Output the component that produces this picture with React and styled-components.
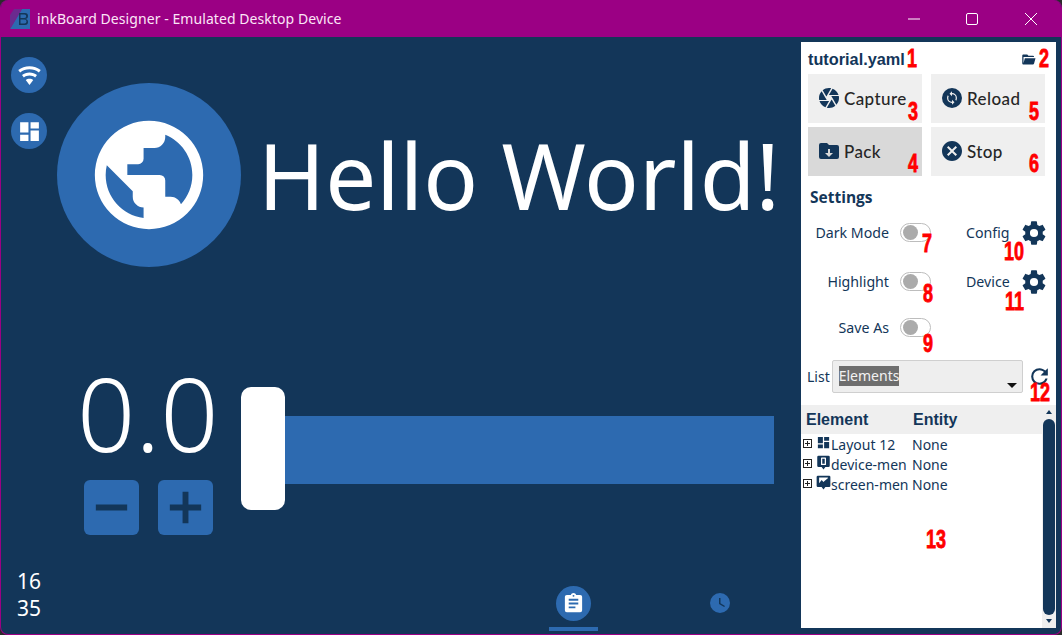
import React from "react";
import styled, { createGlobalStyle } from "styled-components";

const NAVY = "#133659";
const BLUE = "#2d6ab0";

const GlobalStyle = createGlobalStyle`
  html, body {
    margin: 0;
    padding: 0;
    background: #2b2b2b;
    overflow: hidden;
  }
  * { box-sizing: border-box; }
`;

const ICONS = {
  earth: "M17.9,17.39C17.64,16.59 16.89,16 16,16H15V13A1,1 0 0,0 14,12H8V10H10A1,1 0 0,0 11,9V7H13A2,2 0 0,0 15,5V4.59C17.93,5.77 20,8.64 20,12C20,14.08 19.2,15.97 17.9,17.39M11,19.93C7.05,19.44 4,16.08 4,12C4,11.38 4.08,10.78 4.21,10.21L9,15V16A2,2 0 0,0 11,18M12,2A10,10 0 0,0 2,12A10,10 0 0,0 12,22A10,10 0 0,0 22,12A10,10 0 0,0 12,2Z",
  wifi: "M12,21L15.6,16.2C14.6,15.45 13.35,15 12,15C10.65,15 9.4,15.45 8.4,16.2L12,21M12,3C7.95,3 4.21,4.34 1.2,6.6L3,9C5.5,7.12 8.62,6 12,6C15.38,6 18.5,7.12 21,9L22.8,6.6C19.79,4.34 16.05,3 12,3M12,9C9.3,9 6.81,9.89 4.8,11.4L6.6,13.8C8.1,12.67 9.97,12 12,12C14.03,12 15.9,12.67 17.4,13.8L19.2,11.4C17.19,9.89 14.7,9 12,9Z",
  dashboard: "M13,3V9H21V3M13,21H21V11H13M3,21H11V15H3M3,13H11V3H3V13Z",
  iris: "M13.73,15L9.83,21.76C10.53,21.91 11.25,22 12,22C14.4,22 16.6,21.15 18.32,19.75L14.66,13.4M2.46,15C3.38,17.92 5.61,20.26 8.45,21.34L12.12,15M8.54,12L4.64,5.25C3,7 2,9.39 2,12C2,12.68 2.07,13.35 2.2,14H9.69M21.8,10H14.31L14.6,10.5L19.36,18.75C21,16.97 22,14.6 22,12C22,11.31 21.93,10.64 21.8,10M21.54,9C20.62,6.07 18.39,3.74 15.55,2.66L11.88,9M9.4,10.5L14.17,2.24C13.47,2.09 12.75,2 12,2C9.6,2 7.4,2.84 5.68,4.25L9.34,10.6L9.4,10.5Z",
  closeCircle: "M12,2C17.53,2 22,6.47 22,12C22,17.53 17.53,22 12,22C6.47,22 2,17.53 2,12C2,6.47 6.47,2 12,2M15.59,7L12,10.59L8.41,7L7,8.41L10.59,12L7,15.59L8.41,17L12,13.41L15.59,17L17,15.59L13.41,12L17,8.41L15.59,7Z",
  folderDown: "M20,6H12L10,4H4A2,2 0 0,0 2,6V18A2,2 0 0,0 4,20H20A2,2 0 0,0 22,18V8A2,2 0 0,0 20,6M12,18L8,14H11V10H13V14H16L12,18Z",
  folderOpen: "M19,20H4C2.89,20 2,19.1 2,18V6C2,4.89 2.89,4 4,4H10L12,6H19A2,2 0 0,1 21,8H21L4,8V18L6.14,10H23.21L20.93,18.5C20.7,19.37 19.92,20 19,20Z",
  cog: "M12,15.5A3.5,3.5 0 0,1 8.5,12A3.5,3.5 0 0,1 12,8.5A3.5,3.5 0 0,1 15.5,12A3.5,3.5 0 0,1 12,15.5M19.43,12.97C19.47,12.65 19.5,12.33 19.5,12C19.5,11.67 19.47,11.34 19.43,11L21.54,9.37C21.73,9.22 21.78,8.95 21.66,8.73L19.66,5.27C19.54,5.05 19.27,4.96 19.05,5.05L16.56,6.05C16.04,5.66 15.5,5.32 14.87,5.07L14.5,2.42C14.46,2.18 14.25,2 14,2H10C9.75,2 9.54,2.18 9.5,2.42L9.13,5.07C8.5,5.32 7.96,5.66 7.44,6.05L4.95,5.05C4.73,4.96 4.46,5.05 4.34,5.27L2.34,8.73C2.21,8.95 2.27,9.22 2.46,9.37L4.57,11C4.53,11.34 4.5,11.67 4.5,12C4.5,12.33 4.53,12.65 4.57,12.97L2.46,14.63C2.27,14.78 2.21,15.05 2.34,15.27L4.34,18.73C4.46,18.95 4.73,19.03 4.95,18.95L7.44,17.94C7.96,18.34 8.5,18.68 9.13,18.93L9.5,21.58C9.54,21.82 9.75,22 10,22H14C14.25,22 14.46,21.82 14.5,21.58L14.87,18.93C15.5,18.67 16.04,18.34 16.56,17.94L19.05,18.95C19.27,19.03 19.54,18.95 19.66,18.73L21.66,15.27C21.78,15.05 21.73,14.78 21.54,14.63L19.43,12.97Z",
  refresh: "M17.65,6.35C16.2,4.9 14.21,4 12,4A8,8 0 0,0 4,12A8,8 0 0,0 12,20C15.73,20 18.84,17.45 19.73,14H17.65C16.83,16.33 14.61,18 12,18A6,6 0 0,1 6,12A6,6 0 0,1 12,6C13.66,6 15.14,6.69 16.22,7.78L13,11H20V4L17.65,6.35Z",
  clipboard: "M17,9H7V7H17M17,13H7V11H17M14,17H7V15H14M12,3A1,1 0 0,1 13,4A1,1 0 0,1 12,5A1,1 0 0,1 11,4A1,1 0 0,1 12,3M19,3H14.82C14.4,1.84 13.3,1 12,1C10.7,1 9.6,1.84 9.18,3H5A2,2 0 0,0 3,5V19A2,2 0 0,0 5,21H19A2,2 0 0,0 21,19V5A2,2 0 0,0 19,3Z",
  clock: "M12,2A10,10 0 0,1 22,12A10,10 0 0,1 12,22A10,10 0 0,1 2,12A10,10 0 0,1 12,2M12.5,7H11V13L16.2,16.1L17,14.9L12.5,12.2V7Z",
  minus: "M4,10.5H20V13.5H4Z",
  plus: "M10.5,4H13.5V10.5H20V13.5H13.5V20H10.5V13.5H4V10.5H10.5Z",
  deviceMenu: "M4,1H20A2,2 0 0,1 22,3V17A2,2 0 0,1 20,19H15L12,23L9,19H4A2,2 0 0,1 2,17V3A2,2 0 0,1 4,1M9,4A1,1 0 0,0 8,5V15A1,1 0 0,0 9,16H15A1,1 0 0,0 16,15V5A1,1 0 0,0 15,4H9M10,6H14V14H10Z",
  screenMenu: "M3,1H21A2,2 0 0,1 23,3V17A2,2 0 0,1 21,19H15L12,23L9,19H3A2,2 0 0,1 1,17V3A2,2 0 0,1 3,1M5,13L9,8L12,11L14,9L19,5V4H5Z",
};

const SYNC_PATH = "M12,18A6,6 0 0,1 6,12C6,11 6.25,10.03 6.7,9.2L5.24,7.74C4.46,8.97 4,10.43 4,12A8,8 0 0,0 12,20V23L16,19L12,15M12,4V1L8,5L12,9V6A6,6 0 0,1 18,12C18,13 17.75,13.97 17.3,14.8L18.76,16.26C19.54,15.03 20,13.57 20,12A8,8 0 0,0 12,4Z";

const Icon = ({ name, size, color = "currentColor" }) => (
  <svg width={size} height={size} viewBox="0 0 24 24" fill={color} style={{ display: "block", flexShrink: 0 }}>
    <path d={ICONS[name]} />
  </svg>
);

const SyncCircle = ({ size }) => (
  <svg width={size} height={size} viewBox="0 0 24 24" style={{ display: "block", flexShrink: 0 }}>
    <circle cx="12" cy="12" r="10" fill={NAVY} />
    <path d={SYNC_PATH} fill="#efefef" transform="translate(12 12) scale(0.62) translate(-12 -12)" />
  </svg>
);

const Window = styled.div`
  position: relative;
  width: 1062px;
  height: 635px;
  display: flex;
  flex-direction: column;
  background: ${NAVY};
  border: 1px solid #9b0084;
  border-top: 0;
  border-radius: 8px;
  overflow: hidden;
`;

const TitleBar = styled.header`
  height: 37px;
  flex-shrink: 0;
  margin: 0 -1px;
  display: flex;
  align-items: center;
  padding: 0 2px 0 10px;
  background: #9b0084;
  color: #fbe6f7;
  font: 14px "Noto Sans", sans-serif;
  letter-spacing: 0.07px;
`;

const TitleText = styled.span`
  margin-left: 7px;
  flex: 1;
  white-space: nowrap;
`;

const WinButton = styled.div`
  width: 58.5px;
  height: 37px;
  display: flex;
  align-items: center;
  justify-content: center;
`;

const Body = styled.div`
  flex: 1;
  min-height: 0;
  display: flex;
`;

const Device = styled.main`
  width: 800px;
  display: flex;
  color: #fff;
  font-family: "Noto Sans", sans-serif;
`;

const StatusColumn = styled.div`
  width: 56px;
  flex-shrink: 0;
  display: flex;
  flex-direction: column;
  align-items: flex-start;
  gap: 20px;
  padding: 20px 0 12px 10px;
`;

const StatusIcon = styled.div`
  width: 36px;
  height: 36px;
  border-radius: 50%;
  background: ${BLUE};
  display: flex;
  align-items: center;
  justify-content: center;
  color: #fff;
`;

const Clock = styled.div`
  margin-top: auto;
  padding-left: 6px;
  font-size: 21px;
  line-height: 27px;
`;

const Content = styled.div`
  flex: 1;
  min-width: 0;
  display: flex;
  flex-direction: column;
`;

const Hero = styled.div`
  margin-top: 46px;
  display: flex;
  align-items: center;
  gap: 17px;
`;

const HeroBadge = styled.div`
  width: 184px;
  height: 184px;
  flex-shrink: 0;
  border-radius: 50%;
  background: ${BLUE};
  display: flex;
  align-items: center;
  justify-content: center;
`;

const HeroText = styled.div`
  font-size: 90.7px;
  line-height: 100px;
  white-space: nowrap;
`;

const Counter = styled.div`
  margin-top: 96px;
  display: flex;
`;

const CounterLeft = styled.div`
  width: 184px;
  padding-left: 27px;
  flex-shrink: 0;
`;

const CounterValue = styled.div`
  font-weight: 300;
  font-size: 102px;
  line-height: 100px;
  margin-left: -7px;
  white-space: nowrap;
`;

const StepRow = styled.div`
  margin-top: 17px;
  display: flex;
  gap: 19px;
`;

const StepButton = styled.div`
  width: 55px;
  height: 55px;
  border-radius: 6px;
  background: ${BLUE};
  color: ${NAVY};
  display: flex;
  align-items: center;
  justify-content: center;
`;

const Slider = styled.div`
  margin-top: 24px;
  height: 123px;
  display: flex;
  align-items: center;
`;

const SliderThumb = styled.div`
  width: 44px;
  height: 123px;
  background: #fff;
  border-radius: 10px;
`;

const SliderTrack = styled.div`
  width: 489px;
  height: 68px;
  margin-top: 2px;
  background: ${BLUE};
`;

const BottomNav = styled.nav`
  margin-top: auto;
  padding-left: 492px;
  height: 48px;
  display: flex;
  gap: 97px;
`;

const NavTab = styled.div`
  width: 49px;
  display: flex;
  flex-direction: column;
  align-items: center;
  justify-content: flex-start;
  padding-top: ${(p) => (p.$active ? "0" : "7px")};
`;

const NavBadge = styled.div`
  width: ${(p) => p.$size}px;
  height: ${(p) => p.$size}px;
  border-radius: 50%;
  background: ${(p) => (p.$plain ? "none" : BLUE)};
  display: flex;
  align-items: center;
  justify-content: center;
  color: #fff;
`;

const NavLine = styled.div`
  width: 49px;
  height: 4px;
  margin-top: 6px;
  background: ${BLUE};
`;

const Panel = styled.aside`
  position: relative;
  width: 255px;
  height: 586px;
  margin-top: 5px;
  background: #fff;
  display: flex;
  flex-direction: column;
  color: ${NAVY};
  font-family: "Noto Sans", sans-serif;
`;

const FileRow = styled.div`
  height: 32px;
  padding: 2px 20px 0 7px;
  display: flex;
  align-items: center;
  justify-content: space-between;
  font: bold 16.3px "Liberation Sans", sans-serif;
`;

const ButtonGrid = styled.div`
  display: grid;
  grid-template-columns: 114px 114px;
  grid-auto-rows: 49px;
  gap: 4px 9px;
  padding-left: 7px;
`;

const ActionButton = styled.div`
  background: ${(p) => (p.$pressed ? "#d9d9d9" : "#efefef")};
  display: flex;
  align-items: center;
  gap: 3px;
  padding: 0 0 1px 9px;
  color: #262626;
  font: 500 17px Lato, sans-serif;
  letter-spacing: 0.4px;
`;

const SectionTitle = styled.div`
  margin-top: 11px;
  padding-left: 9px;
  font: 700 15.5px/20px "Open Sans", sans-serif;
`;

const SettingsGrid = styled.div`
  margin-top: 6px;
  display: grid;
  grid-template-columns: 130px 1fr;
  grid-template-rows: 49px 49px 43px;
`;

const SettingRow = styled.div`
  display: flex;
  align-items: center;
  justify-content: flex-end;
  font-size: 14.2px;
  padding-bottom: 10px;
`;

const Toggle = styled.div`
  width: 31px;
  height: 19px;
  margin-left: 11px;
  border: 1px solid #bdbdbd;
  border-radius: 10px;
  padding: 1px 2px;
  &::before {
    content: "";
    display: block;
    width: 15px;
    height: 15px;
    border-radius: 50%;
    background: #ababab;
  }
`;

const LinkRow = styled.div`
  display: flex;
  align-items: center;
  font-size: 14.2px;
  padding: 0 10px 10px 35px;
  gap: 10px;
  justify-content: flex-start;
`;

const ListRow = styled.div`
  margin-top: 6px;
  height: 33px;
  display: flex;
  align-items: center;
  padding-left: 6px;
  font-size: 14px;
`;

const ComboBox = styled.div`
  position: relative;
  width: 191px;
  height: 33px;
  margin: 0 4px 0 2px;
  border: 1px solid #cfcfcf;
  border-radius: 2px;
  background: #eeeeee;
  padding: 5px 0 0 6px;
  &::after {
    content: "";
    position: absolute;
    right: 5px;
    bottom: 4px;
    border: 5.5px solid transparent;
    border-top: 5.5px solid #111;
    border-bottom: 0;
  }
`;

const ComboText = styled.span`
  display: inline-block;
  height: 20px;
  line-height: 20px;
  width: 60px;
  background: #6e6e6e;
  color: #f2f2f2;
`;

const TreeArea = styled.div`
  flex: 1;
  min-height: 0;
  margin-top: 12px;
  display: flex;
`;

const Tree = styled.div`
  flex: 1;
  min-width: 0;
`;

const TreeHead = styled.div`
  height: 29px;
  padding-left: 5px;
  display: grid;
  grid-template-columns: 107px 1fr;
  align-items: center;
  background: #efefef;
  font: bold 16px "Liberation Sans", sans-serif;
`;

const TreeRow = styled.div`
  height: 20px;
  display: grid;
  grid-template-columns: 14px 14px 81px 1fr;
  align-items: center;
  padding-left: 2px;
  font-size: 14px;
  white-space: nowrap;
`;

const Expander = styled.div`
  width: 9px;
  height: 9px;
  margin-bottom: 2px;
  border: 1px solid #222;
  position: relative;
  &::before {
    content: "";
    position: absolute;
    left: 1px;
    right: 1px;
    top: 3px;
    height: 1px;
    background: #222;
  }
  &::after {
    content: "";
    position: absolute;
    top: 1px;
    bottom: 1px;
    left: 3px;
    width: 1px;
    background: #222;
  }
`;

const TreeIcon = styled.div`
  margin: 0 0 4px -1px;
`;

const ScrollBar = styled.div`
  width: 14px;
  background: #efefef;
  display: flex;
  flex-direction: column;
  align-items: center;
  padding: 2px 0;
`;

const ScrollArrow = styled.div`
  height: 10px;
  display: flex;
  align-items: center;
  &::before {
    content: "";
    border: 3.5px solid transparent;
    ${(p) => (p.$up ? `border-bottom: 4px solid ${NAVY}; border-top: 0;` : `border-top: 4px solid ${NAVY}; border-bottom: 0;`)}
  }
`;

const ScrollThumb = styled.div`
  flex: 1;
  width: 12px;
  margin: 2px 0 1px;
  border-radius: 6px;
  background: ${NAVY};
`;

const Mark = styled.span`
  position: absolute;
  left: ${(p) => p.$x - 801}px;
  top: ${(p) => p.$y - 42}px;
  color: #f00;
  font: bold 25px/20px "Liberation Sans", sans-serif;
  -webkit-text-stroke: 0.8px #f00;
  transform: scaleX(0.72);
  transform-origin: left top;
`;

const MARKS = [
  ["1", 907, 48], ["2", 1039, 48], ["3", 908, 101], ["4", 908, 153],
  ["5", 1029, 101], ["6", 1029, 153], ["7", 922, 233], ["8", 923, 283],
  ["9", 923, 333], ["10", 1004, 241], ["11", 1005, 291], ["12", 1030, 382],
  ["13", 926, 529],
];

const ACTIONS = [
  { label: "Capture", icon: <Icon name="iris" size={24} color={NAVY} /> },
  { label: "Reload", icon: <SyncCircle size={24} /> },
  { label: "Pack", icon: <Icon name="folderDown" size={24} color={NAVY} />, pressed: true },
  { label: "Stop", icon: <Icon name="closeCircle" size={24} color={NAVY} /> },
];

const TREE = [
  { label: "Layout 12", icon: "dashboard" },
  { label: "device-men", icon: "deviceMenu" },
  { label: "screen-men", icon: "screenMenu" },
];

export default function App() {
  return (
    <Window>
      <GlobalStyle />
      <TitleBar>
        <svg width="20" height="20" viewBox="0 0 20 20" style={{ flexShrink: 0 }}>
          <path d="M0 20L12 0H20V20Z" fill="#2d6ab0" />
          <path d="M0 20L12 0H4L0 6Z" fill="#6b2a8f" />
          <path d="M9 4H15A3 3 0 0 1 15 10A3 3 0 0 1 15 16H9Z M10.5 5.5V9H14.5A1.7 1.7 0 0 0 14.5 5.5Z M10.5 10.5V14.5H14.5A2 2 0 0 0 14.5 10.5Z" fill="#133659" />
        </svg>
        <TitleText>inkBoard Designer - Emulated Desktop Device</TitleText>
        <WinButton>
          <svg width="12" height="12" viewBox="0 0 12 12"><path d="M0 6H12" stroke="#fff" strokeWidth="1" /></svg>
        </WinButton>
        <WinButton>
          <svg width="12" height="12" viewBox="0 0 12 12"><rect x=".5" y=".5" width="11" height="11" rx="1.5" fill="none" stroke="#fff" /></svg>
        </WinButton>
        <WinButton>
          <svg width="12" height="12" viewBox="0 0 12 12"><path d="M0 0L12 12M12 0L0 12" stroke="#fff" /></svg>
        </WinButton>
      </TitleBar>
      <Body>
        <Device>
          <StatusColumn>
            <StatusIcon><Icon name="wifi" size={25} /></StatusIcon>
            <StatusIcon><Icon name="dashboard" size={25} /></StatusIcon>
            <Clock>16<br />35</Clock>
          </StatusColumn>
          <Content>
            <Hero>
              <HeroBadge><Icon name="earth" size={130} color="#fff" /></HeroBadge>
              <HeroText>Hello World!</HeroText>
            </Hero>
            <Counter>
              <CounterLeft>
                <CounterValue>0.0</CounterValue>
                <StepRow>
                  <StepButton><Icon name="minus" size={47} /></StepButton>
                  <StepButton><Icon name="plus" size={47} /></StepButton>
                </StepRow>
              </CounterLeft>
              <Slider>
                <SliderThumb />
                <SliderTrack />
              </Slider>
            </Counter>
            <BottomNav>
              <NavTab $active>
                <NavBadge $size={35}><Icon name="clipboard" size={23} /></NavBadge>
                <NavLine />
              </NavTab>
              <NavTab>
                <NavBadge $size={20} $plain><Icon name="clock" size={24} color={BLUE} /></NavBadge>
              </NavTab>
            </BottomNav>
          </Content>
        </Device>
        <Panel>
          <FileRow>
            <span>tutorial.yaml</span>
            <Icon name="folderOpen" size={15} />
          </FileRow>
          <ButtonGrid>
            {ACTIONS.map((a) => (
              <ActionButton key={a.label} $pressed={a.pressed}>
                {a.icon}
                {a.label}
              </ActionButton>
            ))}
          </ButtonGrid>
          <SectionTitle>Settings</SectionTitle>
          <SettingsGrid>
            <SettingRow>Dark Mode<Toggle /></SettingRow>
            <LinkRow>Config<Icon name="cog" size={28} /></LinkRow>
            <SettingRow>Highlight<Toggle /></SettingRow>
            <LinkRow>Device<Icon name="cog" size={28} /></LinkRow>
            <SettingRow>Save As<Toggle /></SettingRow>
          </SettingsGrid>
          <ListRow>
            List
            <ComboBox><ComboText>Elements</ComboText></ComboBox>
            <Icon name="refresh" size={25} />
          </ListRow>
          <TreeArea>
            <Tree>
              <TreeHead><span>Element</span><span>Entity</span></TreeHead>
              {TREE.map((t) => (
                <TreeRow key={t.label}>
                  <Expander />
                  <TreeIcon><Icon name={t.icon} size={15} /></TreeIcon>
                  <span>{t.label}</span>
                  <span>None</span>
                </TreeRow>
              ))}
            </Tree>
            <ScrollBar>
              <ScrollArrow $up />
              <ScrollThumb />
              <ScrollArrow />
            </ScrollBar>
          </TreeArea>
          {MARKS.map(([n, x, y]) => (
            <Mark key={n} $x={x} $y={y}>{n}</Mark>
          ))}
        </Panel>
      </Body>
    </Window>
  );
}
